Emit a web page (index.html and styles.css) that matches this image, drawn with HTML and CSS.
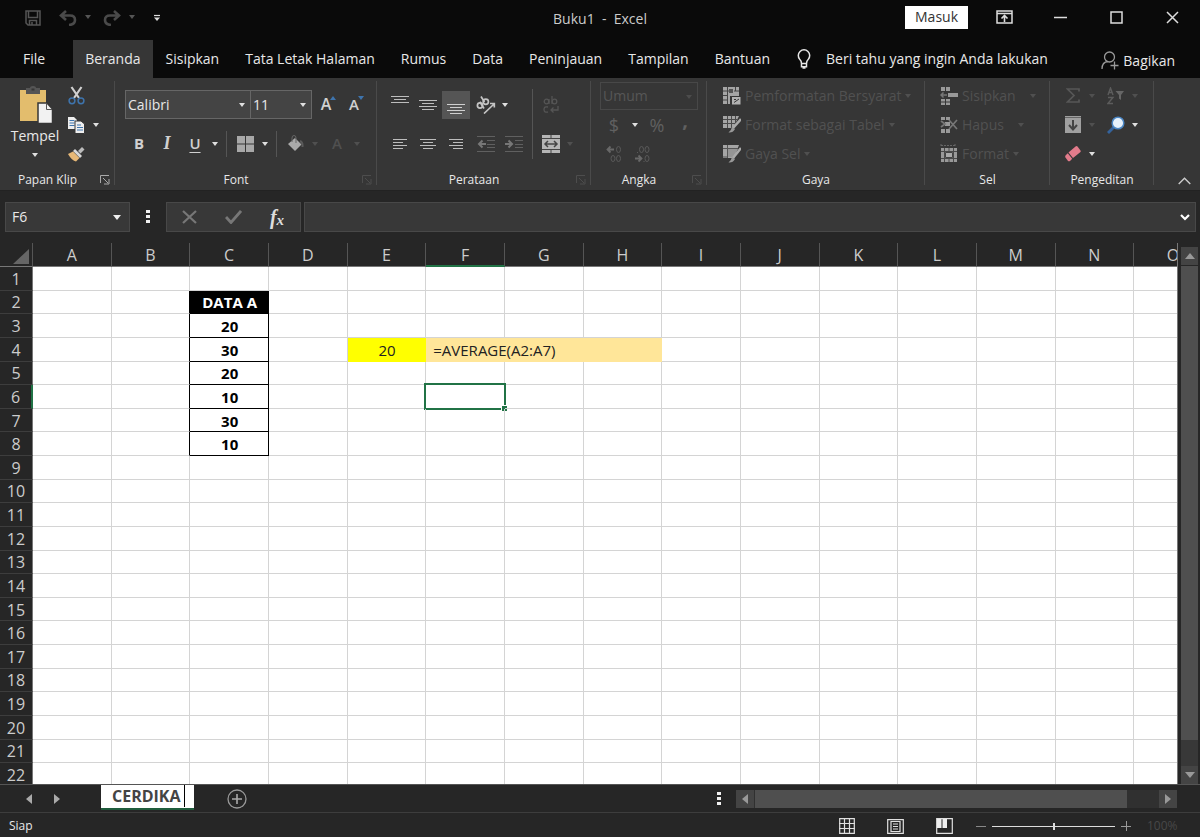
FILE: index.html
```html
<!DOCTYPE html>
<html lang="id">
<head>
<meta charset="utf-8">
<meta name="viewport" content="width=device-width, initial-scale=1">
<title>Buku1 - Excel</title>
<link rel="stylesheet" href="styles.css">
</head>
<body>
<header class="titlebar">
  <div class="quick">
    <button class="qbtn" aria-label="Simpan"><svg width="16" height="16" viewBox="0 0 16 16"><path d="M1 1h14v14H3l-2-2zM3.500 1v6.500h9V1M4.500 15v-4.500h7V15M7 12v3" fill="none" stroke="#555" stroke-width="1.500"/></svg></button>
    <button class="qbtn wide" aria-label="Urungkan"><svg width="18" height="16" viewBox="0 0 18 16"><path d="M7 1 2 5.500 7 10M2.500 5.500H11q5 0 5 4.500t-6 5" fill="none" stroke="#4a4a4a" stroke-width="2.600"/></svg><i class="caret dim"></i></button>
    <button class="qbtn wide" aria-label="Ulangi"><svg width="18" height="16" viewBox="0 0 18 16"><path d="M11 1l5 4.500-5 4.500M15.500 5.500H7q-5 0-5 4.500t6 5" fill="none" stroke="#4a4a4a" stroke-width="2.600"/></svg><i class="caret dim"></i></button>
    <button class="qbtn" aria-label="Kustomisasi"><svg width="8" height="8" viewBox="0 0 8 8"><path d="M1 1.500h6" stroke="#ddd" stroke-width="1.200"/><path d="M1 3.500h6L4 7z" fill="#ddd"/></svg></button>
  </div>
  <h1 class="doc">Buku1&nbsp; -&nbsp; Excel</h1>
  <div class="window">
    <button class="signin">Masuk</button>
    <button class="wbtn" aria-label="Opsi pita"><svg width="17" height="14" viewBox="0 0 17 14"><path d="M1 1h15v12H1zM1 3.500h15" fill="none" stroke="#ddd" stroke-width="1.500"/><path d="M8.500 12V6M5.500 8.500l3-3 3 3" fill="none" stroke="#ddd" stroke-width="1.600"/></svg></button>
    <button class="wbtn" aria-label="Kecilkan"><svg width="13" height="13" viewBox="0 0 13 13"><path d="M0 6.500h13" stroke="#ddd" stroke-width="1.500"/></svg></button>
    <button class="wbtn" aria-label="Besarkan"><svg width="13" height="13" viewBox="0 0 13 13"><path d="M1 1h11v11H1z" fill="none" stroke="#ddd" stroke-width="1.500"/></svg></button>
    <button class="wbtn" aria-label="Tutup"><svg width="13" height="13" viewBox="0 0 13 13"><path d="M1 1l11 11M12 1 1 12" stroke="#ddd" stroke-width="1.500"/></svg></button>
  </div>
</header>

<nav class="tabs">
  <button class="tab file">File</button>
  <button class="tab active">Beranda</button>
  <button class="tab">Sisipkan</button>
  <button class="tab">Tata Letak Halaman</button>
  <button class="tab">Rumus</button>
  <button class="tab">Data</button>
  <button class="tab">Peninjauan</button>
  <button class="tab">Tampilan</button>
  <button class="tab">Bantuan</button>
  <button class="tab tell"><svg width="14" height="20" viewBox="0 0 14 20"><path d="M4.500 14.500q0-2.500-1.800-4.200a5.700 5.700 0 1 1 8.600 0Q9.500 12 9.500 14.500zM4.500 14.500v3.200h5v-3.200M5.500 19h3" fill="none" stroke="#e6e6e6" stroke-width="1.500"/></svg>Beri tahu yang ingin Anda lakukan</button>
  <button class="tab share"><svg width="18" height="19" viewBox="0 0 18 19"><circle cx="8.500" cy="6" r="5" fill="none" stroke="#999" stroke-width="1.300"/><path d="M1 18q0-7 6-7.500M9.500 14.500h8M13.500 10.500v8" fill="none" stroke="#999" stroke-width="1.300"/></svg>Bagikan</button>
</nav>

<section class="ribbon" aria-label="Beranda">
  <div class="group g-clip">
    <div class="body">
      <button class="paste"><svg width="36" height="38" viewBox="0 0 36 38"><path d="M3 4h26v31H3z" fill="#e3bd6d"/><path d="M9 2h4q0-2 3-2t3 2h4v6H9z" fill="#555"/><path d="M14.500 2.500h3v2h-3z" fill="#363636"/><path d="M21 17h9l5.500 6v14.500H21z" fill="#f2f2f2" stroke="#363636" stroke-width="1.500"/><path d="M29.500 17v6.500H35" fill="none" stroke="#555"/></svg><span>Tempel</span><i class="caret"></i></button>
      <div class="rows three">
        <div class="row"><button class="ib" aria-label="Potong"><svg width="17" height="19" viewBox="0 0 17 19"><path d="M3.500 1 11 12M13.500 1 6 12" stroke="#d0d0d0" stroke-width="2.200"/><circle cx="4" cy="14.800" r="2.900" fill="none" stroke="#3e74ad" stroke-width="1.500"/><circle cx="13" cy="14.800" r="2.900" fill="none" stroke="#3e74ad" stroke-width="1.500"/></svg></button></div>
        <div class="row"><button class="ib" aria-label="Salin"><svg width="18" height="18" viewBox="0 0 18 18"><path d="M1 1h6l3 3v9H1z" fill="#eee"/><path d="M2.500 4.500h5M2.500 7h5M2.500 9.500h5" stroke="#3e74ad"/><path d="M8 5h6l3.500 3v9.500H8z" fill="#eee" stroke="#363636"/><path d="M10 9h4M10 11.500h6M10 14h6" stroke="#3e74ad"/></svg></button><i class="caret"></i></div>
        <div class="row"><button class="ib" aria-label="Pewarna Format"><svg width="18" height="16" viewBox="0 0 18 16"><path d="M11 5l4-4 2.500 2.500-4 4z" fill="#bbb"/><path d="M8 3l7 7-2 2-7-7z" fill="#d8d8d8"/><path d="M6 5.500 12.500 12 9 15.500Q5 15 1 8z" fill="#e7b877"/></svg></button></div>
      </div>
    </div>
    <div class="foot"><span>Papan Klip</span><button class="launch" aria-label="Opsi papan klip"><svg width="10" height="10" viewBox="0 0 10 10"><path d="M.5 8V.5H9M3 3l5 5M9 4v5H4" fill="none" stroke="currentColor"/></svg></button></div>
  </div>

  <div class="group g-font">
    <div class="body"><div class="rows two">
      <div class="row">
        <span class="combo name"><select aria-label="Font"><option>Calibri</option></select></span><span class="combo size"><select aria-label="Ukuran font"><option>11</option></select></span>
        <button class="ib glyph big" aria-label="Perbesar font">A<svg class="mark" width="6" height="4" viewBox="0 0 6 4"><path d="M0 4 3 0l3 4z" fill="#3e74ad"/></svg></button>
        <button class="ib glyph" aria-label="Perkecil font">A<svg class="mark" width="6" height="4" viewBox="0 0 6 4"><path d="M0 0h6L3 4z" fill="#3e74ad"/></svg></button>
      </div>
      <div class="row">
        <button class="ib glyph b">B</button><button class="ib glyph it">I</button><button class="ib glyph un">U</button><i class="caret"></i>
        <i class="vline"></i>
        <button class="ib" aria-label="Batas"><svg width="17" height="16" viewBox="0 0 17 16"><path d="M0 0h8v7.500H0zM9 0h8v7.500H9zM0 8.500h8V16H0zM9 8.500h8V16H9z" fill="#a8a8a8"/></svg></button><i class="caret"></i>
        <i class="vline"></i>
        <button class="ib" aria-label="Warna isian"><svg width="17" height="17" viewBox="0 0 17 17"><path d="M8 3l6.500 6.500L8 16 1 9z" fill="#aaa"/><path d="M5 7V3q0-2.500 2-2.500T9 3v5" fill="none" stroke="#666"/><path d="M13 6q3 1 2.500 6" fill="none" stroke="#5a5a5a" stroke-width="2"/></svg></button><i class="caret off"></i>
        <button class="ib glyph faint" aria-label="Warna font">A</button><i class="caret off"></i>
      </div>
    </div></div>
    <div class="foot"><span>Font</span><button class="launch off" aria-label="Opsi font"><svg width="10" height="10" viewBox="0 0 10 10"><path d="M.5 8V.5H9M3 3l5 5M9 4v5H4" fill="none" stroke="currentColor"/></svg></button></div>
  </div>

  <div class="group g-align">
    <div class="body"><div class="rows two">
      <div class="row">
        <button class="ib" aria-label="Rata atas"><svg width="18" height="18" viewBox="0 0 18 18"><path d="M0 .5h18M3 3.500h12M0 6.500h18" stroke="#bdbdbd"/></svg></button>
        <button class="ib" aria-label="Rata tengah"><svg width="18" height="18" viewBox="0 0 18 18"><path d="M0 4.500h18M3 7.500h12M0 10.500h18M3 13.500h12" stroke="#bdbdbd"/></svg></button>
        <button class="ib on" aria-label="Rata bawah"><svg width="18" height="18" viewBox="0 0 18 18"><path d="M0 8.500h18M3 11.500h12M0 14.500h18M3 17.500h12" stroke="#cfcfcf"/></svg></button>
        <button class="ib orient" aria-label="Orientasi"><svg width="20" height="18" viewBox="0 0 20 18"><g fill="none" stroke="#c4c4c4" stroke-width="1.700"><circle cx="4" cy="9.500" r="2.600"/><path d="M3.800 5.800 8 12.500"/><circle cx="9.800" cy="5.800" r="2.600"/><path d="M5 .5 8.500 6M8 17.500 18 8M14 7.500h4.300v4"/></g></svg></button><i class="caret"></i>
      </div>
      <div class="row">
        <button class="ib" aria-label="Rata kiri"><svg width="14" height="12" viewBox="0 0 14 12"><path d="M0 1.500h14M0 4.500h10M0 7.500h14M0 10.500h10" stroke="#bdbdbd"/></svg></button>
        <button class="ib" aria-label="Pusatkan"><svg width="16" height="12" viewBox="0 0 16 12"><path d="M0 1.500h16M3 4.500h10M0 7.500h16M3 10.500h10" stroke="#bdbdbd"/></svg></button>
        <button class="ib" aria-label="Rata kanan"><svg width="14" height="12" viewBox="0 0 14 12"><path d="M0 1.500h14M4 4.500h10M0 7.500h14M4 10.500h10" stroke="#bdbdbd"/></svg></button>
        <button class="ib orient" aria-label="Kurangi inden"><svg width="18" height="16" viewBox="0 0 18 16"><path d="M0 .5h18M10 4.500h8M10 8.500h8M10 11.500h8M0 15.500h18" stroke="#606060"/><path d="M9 8H2M5.500 4.500 2 8l3.500 3.500" fill="none" stroke="#777" stroke-width="2"/></svg></button>
        <button class="ib" aria-label="Tambah inden"><svg width="18" height="16" viewBox="0 0 18 16"><path d="M0 .5h18M10 4.500h8M10 8.500h8M10 11.500h8M0 15.500h18" stroke="#606060"/><path d="M0 8h7M3.500 4.500 7 8l-3.500 3.500" fill="none" stroke="#777" stroke-width="2"/></svg></button>
      </div>
    </div>
    <i class="vline tall"></i>
    <div class="rows two">
      <div class="row"><button class="ib" aria-label="Bungkus teks"><svg width="16" height="18" viewBox="0 0 16 18"><g fill="none" stroke="#555" stroke-width="1.300"><circle cx="3.500" cy="5.500" r="2.300"/><path d="M6 3v5M9 0v8"/><circle cx="11.500" cy="5.500" r="2.300"/><path d="M5 11q-4-1-4 2.500T5 16M15 10v4H8M10.500 11.500 8 14l2.500 2.500"/></g></svg></button></div>
      <div class="row"><button class="ib" aria-label="Gabungkan"><svg width="18" height="18" viewBox="0 0 18 18"><path d="M0 0h18v18H0z" fill="#b5b5b5"/><path d="M0 3.500h18M0 14.500h18M9 0v3.500M9 14.500V18" stroke="#444"/><path d="M3 9h12M6 6 3 9l3 3M12 6l3 3-3 3" fill="none" stroke="#444" stroke-width="1.500"/></svg></button><i class="caret off"></i></div>
    </div></div>
    <div class="foot"><span>Perataan</span><button class="launch off" aria-label="Opsi perataan"><svg width="10" height="10" viewBox="0 0 10 10"><path d="M.5 8V.5H9M3 3l5 5M9 4v5H4" fill="none" stroke="currentColor"/></svg></button></div>
  </div>

  <div class="group g-num">
    <div class="body"><div class="rows three">
      <div class="row"><span class="combo format"><select aria-label="Format angka" disabled><option>Umum</option></select></span></div>
      <div class="row"><button class="ib glyph money">$</button><i class="caret"></i><button class="ib glyph money pct">%</button><button class="ib glyph money comma">,</button></div>
      <div class="row"><button class="ib dec" aria-label="Tambah desimal"><svg width="16" height="18" viewBox="0 0 16 18"><path d="M8 4.500H2M4.500 1.500l-3 3 3 3" fill="none" stroke="#686868" stroke-width="1.800"/><g fill="none" stroke="#5a5a5a"><ellipse cx="12.500" cy="4.500" rx="2" ry="3"/><ellipse cx="7" cy="13.500" rx="2" ry="3"/><ellipse cx="12.500" cy="13.500" rx="2" ry="3"/></g></svg></button><button class="ib dec" aria-label="Kurangi desimal"><svg width="16" height="18" viewBox="0 0 16 18"><path d="M1 13.500h6M4.500 10.500l3 3-3 3" fill="none" stroke="#686868" stroke-width="1.800"/><g fill="none" stroke="#5a5a5a"><ellipse cx="7.500" cy="4.500" rx="2" ry="3"/><ellipse cx="13" cy="4.500" rx="2" ry="3"/><ellipse cx="13" cy="13.500" rx="2" ry="3"/><path d="M3 7.500h1M9.500 16.500h1"/></g></svg></button></div>
    </div></div>
    <div class="foot"><span>Angka</span><button class="launch off" aria-label="Opsi angka"><svg width="10" height="10" viewBox="0 0 10 10"><path d="M.5 8V.5H9M3 3l5 5M9 4v5H4" fill="none" stroke="currentColor"/></svg></button></div>
  </div>

  <div class="group g-style">
    <div class="body"><div class="rows three">
      <div class="row"><button class="lb" disabled><svg width="18" height="18" viewBox="0 0 18 18"><path d="M0 0h16v9H7v8H0z" fill="#a5a5a5"/><path d="M0 4h6M0 8.500h4M0 13h4M4.500 0v17M11 4h5M12.500 0v4" stroke="#444"/><path d="M6 2h4v4H6z" fill="#555"/><path d="M8.500 9.500H18V18H8.500z" fill="#b2b2b2" stroke="#363636"/><path d="M11 15.500l5-3.500M11 12.500h2" stroke="#363636"/></svg>Pemformatan Bersyarat<i class="caret off"></i></button></div>
      <div class="row"><button class="lb" disabled><svg width="18" height="17" viewBox="0 0 18 17"><path d="M0 0h16l-6 12H0z" fill="#a5a5a5"/><path d="M0 3.500h14M0 7.500h12M4.500 0v12M8.500 0v12M12.500 0v9" stroke="#4a4a4a"/><path d="M18 3 10 12" stroke="#aaa" stroke-width="2.600"/><path d="M9 11l3 2q-2 4-6.500 3.500Q8.500 14 9 11z" fill="#999"/></svg>Format sebagai Tabel<i class="caret off"></i></button></div>
      <div class="row"><button class="lb" disabled><svg width="18" height="18" viewBox="0 0 18 18"><path d="M0 0h16l-5 13H0z" fill="#a5a5a5"/><path d="M0 3.500h15M4.500 0v13M0 12h5" stroke="#555"/><path d="M5 4h10l-5 8H5z" fill="#959595"/><path d="M18 3 10 13" stroke="#aaa" stroke-width="2.600"/><path d="M9 12l3 2q-2 4-6.500 3.500Q8.500 15 9 12z" fill="#999"/></svg>Gaya Sel<i class="caret off"></i></button></div>
    </div></div>
    <div class="foot"><span>Gaya</span></div>
  </div>

  <div class="group g-cell">
    <div class="body"><div class="rows three">
      <div class="row"><button class="lb" disabled><svg width="18" height="18" viewBox="0 0 18 18"><path d="M1 0h4v4H1zM6 0h4v4H6zM8 6h10v4H8zM1 12h4v6H1zM6 12h4v6H6z" fill="#999"/><path d="M1 15h9" stroke="#363636"/><path d="M7 8H1M3.500 5.500 1 8l2.500 2.500" stroke="#777" fill="none" stroke-width="1.500"/></svg>Sisipkan<i class="caret off far"></i></button></div>
      <div class="row"><button class="lb" disabled><svg width="18" height="18" viewBox="0 0 18 18"><path d="M1 1h4v3H1zM6 1h4v3H6zM5 6h5v4H5zM1 13h4v4H1zM6 13h4v4H6z" fill="#999"/><path d="M1 5l4 3-4 3M9 4l8 9M17 4 9 13" stroke="#777" fill="none" stroke-width="1.700"/></svg>Hapus<i class="caret off far"></i></button></div>
      <div class="row"><button class="lb" disabled><svg width="18" height="19" viewBox="0 0 18 19"><path d="M1 0v3M1 1.500h14M15 0v3" stroke="#666" stroke-dasharray="2 1"/><path d="M1 4h16v14H1z" fill="#999"/><path d="M4.500 4v14M13.500 4v14M1 7.500h16M1 14.500h16M9 14v4M9 4v4" stroke="#4a4a4a"/><path d="M5.500 8.500h7v5h-7z" fill="#aaa" stroke="#444"/></svg>Format<i class="caret off"></i></button></div>
    </div></div>
    <div class="foot"><span>Sel</span></div>
  </div>

  <div class="group g-edit">
    <div class="body">
      <div class="rows three">
        <div class="row"><button class="ib" aria-label="Jumlah otomatis"><svg width="14" height="15" viewBox="0 0 14 15"><path d="M13 3.500V1H1.500L8 7.500 1.500 14H13v-2.500" fill="none" stroke="#575757" stroke-width="1.700"/></svg></button><i class="caret off"></i></div>
        <div class="row"><button class="ib" aria-label="Isian"><svg width="16" height="17" viewBox="0 0 16 17"><path d="M0 0h16v17H0z" fill="#a0a0a0"/><path d="M0 1.500h16" stroke="#666"/><path d="M8 4v9M4 9l4 4.500L12 9" fill="none" stroke="#444" stroke-width="2"/></svg></button><i class="caret off"></i></div>
        <div class="row"><button class="ib" aria-label="Hapus isi"><svg width="16" height="16" viewBox="0 0 16 16"><path d="M10.500.5q1-.8 2 0l3 4q.6 1-.3 1.800L8 12 3.500 6.500z" fill="#e37b8b"/><path d="M2.800 7.200 7.200 12.700 5 15q-1 .6-2 0L.5 11.500q-.6-1 0-2z" fill="#e37b8b"/></svg></button><i class="caret"></i></div>
      </div>
      <div class="rows three">
        <div class="row"><button class="ib" aria-label="Urutkan"><svg width="18" height="18" viewBox="0 0 18 18"><path d="M1 8 3.500 1 6 8M2 5.500h3M1 10.500h5l-5 6h5" fill="none" stroke="#5c5c5c" stroke-width="1.400"/><path d="M8.500 4H17l-3 4v5l-2-1.500V8z" fill="#666"/></svg></button><i class="caret off"></i></div>
        <div class="row"><button class="ib" aria-label="Temukan"><svg width="18" height="18" viewBox="0 0 18 18"><path d="M8 10 1 17" stroke="#34639c" stroke-width="2.800"/><circle cx="11" cy="7" r="5.800" fill="#e6f1fb" stroke="#4b86c4" stroke-width="1.500"/></svg></button><i class="caret"></i></div>
      </div>
    </div>
    <div class="foot"><span>Pengeditan</span></div>
  </div>
  <button class="collapse" aria-label="Ciutkan pita"><svg width="13" height="8" viewBox="0 0 13 8"><path d="M.7 7 6.500 1.200 12.300 7" fill="none" stroke="#ccc" stroke-width="1.400"/></svg></button>
</section>

<section class="formula">
  <div class="namebox"><input aria-label="Kotak nama" value="F6"><button aria-label="Daftar nama"><svg width="8" height="5" viewBox="0 0 8 5"><path d="M0 0h8L4 5z" fill="#eee"/></svg></button></div>
  <i class="dots"></i>
  <div class="fx">
    <button aria-label="Batal"><svg width="15" height="14" viewBox="0 0 15 14"><path d="M1 1l13 12M14 1 1 13" stroke="#777" stroke-width="2.200"/></svg></button>
    <button aria-label="Masukkan"><svg width="17" height="14" viewBox="0 0 17 14"><path d="M1 7l5 5.500L16 1" fill="none" stroke="#777" stroke-width="2.800"/></svg></button>
    <button class="fn" aria-label="Sisipkan fungsi">f<small>x</small></button>
  </div>
  <div class="entry"><input aria-label="Bilah rumus"><button aria-label="Luaskan"><svg width="10" height="7" viewBox="0 0 10 7"><path d="M1 1l4 4 4-4" fill="none" stroke="#fff" stroke-width="2.200"/></svg></button></div>
</section>

<main class="work">
  <div class="viewport"><table class="sheet"><thead></thead><tbody></tbody></table></div>
  <div class="vscroll"><button aria-label="Gulir ke atas"><svg width="10" height="6" viewBox="0 0 10 6"><path d="M0 6 5 0l5 6z" fill="#999"/></svg></button><i class="thumb"></i><button aria-label="Gulir ke bawah"><svg width="10" height="6" viewBox="0 0 10 6"><path d="M0 0h10L5 6z" fill="#999"/></svg></button></div>
</main>

<section class="sheetbar">
  <div class="arrows"><button aria-label="Lembar sebelumnya"><svg width="6" height="10" viewBox="0 0 6 10"><path d="M6 0v10L0 5z" fill="#aaa"/></svg></button><button aria-label="Lembar berikutnya"><svg width="6" height="10" viewBox="0 0 6 10"><path d="M0 0v10l6-5z" fill="#aaa"/></svg></button></div>
  <div class="sheettab"><input aria-label="Nama lembar" value="CERDIKA"></div>
  <button class="add" aria-label="Lembar baru"><svg width="20" height="20" viewBox="0 0 20 20"><circle cx="10" cy="10" r="9" fill="none" stroke="#999" stroke-width="1.300"/><path d="M10 5v10M5 10h10" stroke="#aaa" stroke-width="1.600"/></svg></button>
  <i class="dots"></i>
  <div class="hscroll"><button aria-label="Gulir ke kiri"><svg width="6" height="10" viewBox="0 0 6 10"><path d="M6 0v10L0 5z" fill="#999"/></svg></button><i class="thumb"></i><button aria-label="Gulir ke kanan"><svg width="6" height="10" viewBox="0 0 6 10"><path d="M0 0v10l6-5z" fill="#999"/></svg></button></div>
</section>

<footer class="status">
  <span class="ready">Siap</span>
  <button class="view" aria-label="Normal"><svg width="16" height="16" viewBox="0 0 16 16"><path d="M.7.7h14.600v14.600H.7zM5.500 0v16M10.500 0v16M0 5.500h16M0 10.500h16" fill="none" stroke="#e0e0e0" stroke-width="1.200"/></svg></button>
  <button class="view" aria-label="Tata letak halaman"><svg width="17" height="15" viewBox="0 0 17 15"><path d="M.7.7h15.600v13.600H.7zM4 2.500h9v10H4z" fill="none" stroke="#e0e0e0" stroke-width="1.200"/><path d="M6 5h5M6 7.500h5M6 10h5" stroke="#e0e0e0"/></svg></button>
  <button class="view" aria-label="Pratinjau hentian halaman"><svg width="17" height="16" viewBox="0 0 17 16"><path d="M.7.7h15.600v14.600H.7z" fill="none" stroke="#e0e0e0" stroke-width="1.200"/><path d="M1 1h4.500v9H1zM6.500 1H11v9H6.500z" fill="#eee"/></svg></button>
  <button class="step" aria-label="Perkecil"><svg width="10" height="10" viewBox="0 0 10 10"><path d="M0 5.500h10" stroke="#888"/></svg></button>
  <input class="zoom" type="range" aria-label="Zoom" min="0" max="200" value="100">
  <button class="step" aria-label="Perbesar"><svg width="10" height="10" viewBox="0 0 10 10"><path d="M0 5.500h10M5.500 0v10" stroke="#999"/></svg></button>
  <span class="percent">100%</span>
</footer>
<script src="sheet.js"></script>
</body>
</html>
```
FILE: styles.css
```css
* { box-sizing: border-box; }
body {
  margin: 0;
  height: 100vh;
  display: flex;
  flex-direction: column;
  overflow: hidden;
  background: #262626;
  color: #e8e8e8;
  font: 14px/20px "Open Sans", "Noto Sans", sans-serif;
}
button, input, select { font: inherit; color: inherit; background: none; border: 0; padding: 0; margin: 0; outline: 0; }
button { display: flex; align-items: center; justify-content: center; flex: none; }
svg { display: block; flex: none; }
i { font-style: normal; flex: none; }

.caret { width: 0; border: 3px solid transparent; border-top: 4px solid #e0e0e0; border-bottom: 0; }
.caret.dim { border-top-color: #555; }
.caret.off { border-top-color: #505050; }
.dots { width: 4px; height: 14px; background: repeating-linear-gradient(#f0f0f0 0 3px, transparent 3px 5px); }

/* Title bar */
.titlebar { display: grid; grid-template-columns: 1fr auto 1fr; height: 40px; background: #0a0a0a; }
.quick { display: flex; height: 36px; padding-left: 25px; align-items: center; gap: 18px; }
.wide { gap: 8px; }
.wide + .wide { margin-left: -6px; }
.wide .caret { margin-bottom: 3px; }
.doc { margin: 0; font-size: 14px; font-weight: 400; line-height: 37px; color: #ccc; }
.window { display: flex; justify-content: flex-end; height: 34px; align-items: center; }
.signin { height: 23px; padding: 0 10px; margin-right: 8px; background: #fff; color: #333; }
.wbtn { width: 56px; height: 34px; }

/* Ribbon tabs */
.tabs { display: flex; height: 38px; background: #0a0a0a; }
.tab { padding: 0 13px; white-space: nowrap; }
.tab.file { padding: 0 28px 0 23px; }
.tab.active { padding: 0 12px; background: #363636; }
.tab.tell { gap: 15px; padding-left: 14px; }
.tab.share { gap: 4px; margin-left: auto; padding: 3px 25px 0 0; }

/* Ribbon */
.ribbon { display: flex; height: 113px; background: #363636; border-bottom: 1px solid #222; }
.group { display: flex; flex-direction: column; position: relative; flex: none; }
.group::after { content: ""; position: absolute; right: 0; top: 3px; bottom: 5px; width: 1px; background: #4a4a4a; }
.body { display: flex; flex: 1; }
.foot { display: flex; align-items: center; height: 20px; font-size: 12px; }
.foot span { flex: 1; text-align: center; white-space: nowrap; }
.launch { width: 20px; color: #aaa; }
.launch.off { color: #4d4d4d; }
.row { display: flex; align-items: center; }
.two { padding-top: 7px; }
.two .row { height: 39px; }
.three { padding-top: 3px; }
.three .row { height: 29px; }
.ib { width: 28px; height: 28px; position: relative; }
.ib.on { background: #555; }
.vline { width: 1px; height: 26px; background: #555; }
.vline.tall { height: 70px; margin: 11px 4px 0 0; }

.g-clip { width: 115px; }
.paste { flex-direction: column; justify-content: flex-start; width: 58px; padding-top: 8px; margin-left: 6px; }
.paste span { line-height: 24px; }
.paste .caret { margin-top: 5px; }
.g-clip .ib { width: 24px; }
.g-clip .rows .caret { margin-left: 5px; }

.g-font { width: 262px; }
.g-font .rows { padding-left: 10px; }
.combo { position: relative; height: 29px; border: 1px solid #666; background: #444; display: flex; }
.combo::after { content: ""; position: absolute; right: 5px; top: 12px; border: 3px solid transparent; border-top: 4px solid #e0e0e0; border-bottom: 0; pointer-events: none; }
.combo select { appearance: none; width: 100%; padding-left: 2px; }
.combo.name { width: 126px; }
.combo.size { width: 61px; border-left: 0; }
.glyph { font-size: 15px; font-weight: 600; color: #d0d0d0; padding-bottom: 2px; }
.glyph.big { font-size: 16px; }
.glyph .mark { position: absolute; right: 4px; top: 5px; }
.glyph.b { font-weight: 700; }
.glyph.it { font-family: "Liberation Serif", serif; font-style: italic; font-weight: 700; font-size: 18px; }
.glyph.un { text-decoration: underline; text-underline-offset: 3px; }
.glyph.faint { color: #505050; margin-left: 5px; }
.g-font .vline { margin: 0 4px 0 8px; }
.g-font .caret { margin-left: 3px; }

.g-align { width: 214px; }
.g-align .rows:first-child { padding-left: 9px; width: 155px; }
.orient { margin-left: 2px; }
.g-align .caret { margin-left: 2px; }

.g-num { width: 116px; }
.g-num .rows { padding-left: 9px; }
.g-num .caret { margin-left: 4px; }
.combo.format { width: 98px; height: 28px; border-color: #484848; background: none; color: #565656; }
.combo.format select { opacity: 1; color: #565656; }
.combo.format::after { border-top-color: #4c4c4c; }
.money { font-size: 18px; font-weight: 400; color: #606060; padding-bottom: 0; }
.pct { margin-left: 5px; }
.comma { font-size: 20px; font-weight: 700; padding-bottom: 10px; }

.g-style { width: 218px; }
.g-style .rows { padding-left: 16px; }
.lb { gap: 4px; color: #515151; white-space: nowrap; }
.g-cell { width: 125px; }
.g-cell .rows { padding-left: 15px; }
.lb .far { margin-left: 10px; }
.g-edit { width: 104px; }
.g-edit .rows { padding-left: 9px; width: 53px; }
.g-edit .rows + .rows { padding-left: 0; }
.g-edit .caret { margin-left: 2px; }
.collapse { margin-left: auto; align-self: flex-end; padding: 0 9px 5px 0; }

/* Formula bar */
.formula { display: flex; align-items: center; height: 52px; padding: 0 4px 0 5px; }
.namebox, .fx, .entry { display: flex; height: 30px; background: #383838; border: 1px solid #484848; }
.namebox { width: 125px; }
.namebox input { flex: 1; min-width: 0; padding-left: 6px; }
.namebox button { width: 24px; }
.formula .dots { margin: 0 16px; }
.fx { width: 135px; margin-right: 3px; }
.fx button { width: 44px; }
.fx .fn { font: italic 700 20px/28px "Liberation Serif", serif; color: #ddd; }
.fn small { font-size: 15px; padding-top: 5px; }
.entry { flex: 1; }
.entry input { flex: 1; min-width: 0; }
.entry button { width: 20px; }

/* Worksheet */
.work { display: flex; flex: 1; min-height: 0; }
.viewport { flex: 1; min-width: 0; overflow: hidden; border-right: 1px solid #777; }
.sheet { table-layout: fixed; border-collapse: separate; border-spacing: 0; width: calc(100% + 36px); height: calc(100% + 3px); background: #fff; }
.sheet th { padding: 1px 0 0; font-size: 16px; line-height: 20px; font-weight: 400; color: #ccc; background: #262626; }
.sheet thead th { height: 24px; border-bottom: 1px solid #777; border-right: 1px solid #555; }
.sheet thead th.here { border-bottom: 2px solid #217346; }
.sheet .corner { width: 33px; }
.corner svg { margin: 2px 0 0 13px; }
.sheet tbody th { border-bottom: 1px solid #3d3d3d; border-right: 1px solid #777; }
.sheet tbody th.here { border-right: 2px solid #217346; }
.sheet td { position: relative; padding: 1px 0 0 1px; border-right: 1px solid #d4d4d4; border-bottom: 1px solid #d4d4d4; font-size: 15px; line-height: 20px; color: #222; text-align: center; white-space: nowrap; }
.sheet td.data { font-weight: 700; color: #000; border-color: #000; }
.sheet td.edge { border-right-color: #000; }
.sheet td.head { background: #000; color: #fff; }
.sheet td.result { background: #ff0; border-color: #ff0; }
.sheet td.note { background: #ffe699; border-color: #ffe699; text-align: left; padding-left: 7px; }
.selection { position: absolute; inset: -2px; border: 2px solid #217346; }
.selection::after { content: ""; position: absolute; right: -3px; bottom: -3px; width: 5px; height: 5px; background: #217346; outline: 1px solid #fff; }

.vscroll { display: flex; flex-direction: column; width: 22px; padding: 4px 2px 0 3px; }
.vscroll button { height: 18px; background: #444; }
.vscroll .thumb { flex: 1; margin-top: 1px; background: #4f4f4f; border-bottom: 26px solid #383838; }

/* Sheet bar */
.sheetbar { display: flex; align-items: center; height: 29px; border-top: 1px solid #555; border-bottom: 1px solid #3d3d3d; }
.arrows { display: flex; width: 101px; padding-left: 15px; }
.arrows button { width: 28px; height: 24px; }
.sheettab { align-self: flex-start; width: 93px; height: 25px; padding-left: 11px; background: #fff; border-bottom: 2px solid #1f5c3c; }
.sheettab input { width: 73px; height: 22px; border-right: 1px solid #000; color: #444; font-size: 16px; font-weight: 700; }
.add { margin: 0 auto 0 33px; }
.hscroll { display: flex; width: 441px; height: 18px; margin: 0 23px 0 15px; background: #303030; }
.hscroll button { width: 18px; background: #444; }
.hscroll .thumb { flex: 1; margin: 0 32px 0 1px; background: #4f4f4f; }

/* Status bar */
.status { display: flex; align-items: center; height: 24px; padding-top: 2px; font-size: 12px; }
.ready { flex: 1; padding-left: 9px; }
.view { width: 49px; }
.step { width: 10px; }
.view + .step { margin-left: 7px; }
.zoom { appearance: none; width: 123px; height: 16px; margin: 0 6px; background: linear-gradient(#ddd, #ddd) center / 100% 1px no-repeat; }
.zoom::-webkit-slider-thumb { appearance: none; width: 2px; height: 7px; background: #ddd; }
.percent { width: 69px; padding-left: 16px; color: #484848; }
```
FILE: sheet.js
```js
const columns = "ABCDEFGHIJKLMNO".split("");
const cells = {
  C2: ["DATA A", "data head"],
  C3: ["20", "data"], C4: ["30", "data"], C5: ["20", "data"],
  C6: ["10", "data"], C7: ["30", "data"], C8: ["10", "data"],
  E4: ["20", "result"],
  F4: ["=AVERAGE(A2:A7)", "note", 3]
};

const corner = '<th class="corner"><svg width="16" height="15" viewBox="0 0 16 15"><path d="M16 0v15H0z" fill="#666"/></svg></th>';
document.querySelector(".sheet thead").innerHTML =
  "<tr>" + corner + columns.map(c => `<th scope="col"${c === "F" ? ' class="here"' : ""}>${c}</th>`).join("") + "</tr>";

let rows = "";
for (let r = 1; r <= 22; r++) {
  rows += `<tr><th scope="row"${r === 6 ? ' class="here"' : ""}>${r}</th>`;
  for (let i = 0; i < columns.length; i++) {
    const c = columns[i];
    const [text, kind, span = 1] = cells[c + r] || ["", ""];
    const edge = c === "B" && r >= 2 && r <= 8 ? " edge" : "";
    const content = c + r === "F6" ? '<div class="selection"></div>' : text;
    rows += `<td class="${(kind + edge).trim()}" colspan="${span}">${content}</td>`;
    i += span - 1;
  }
  rows += "</tr>";
}
document.querySelector(".sheet tbody").innerHTML = rows;
```
